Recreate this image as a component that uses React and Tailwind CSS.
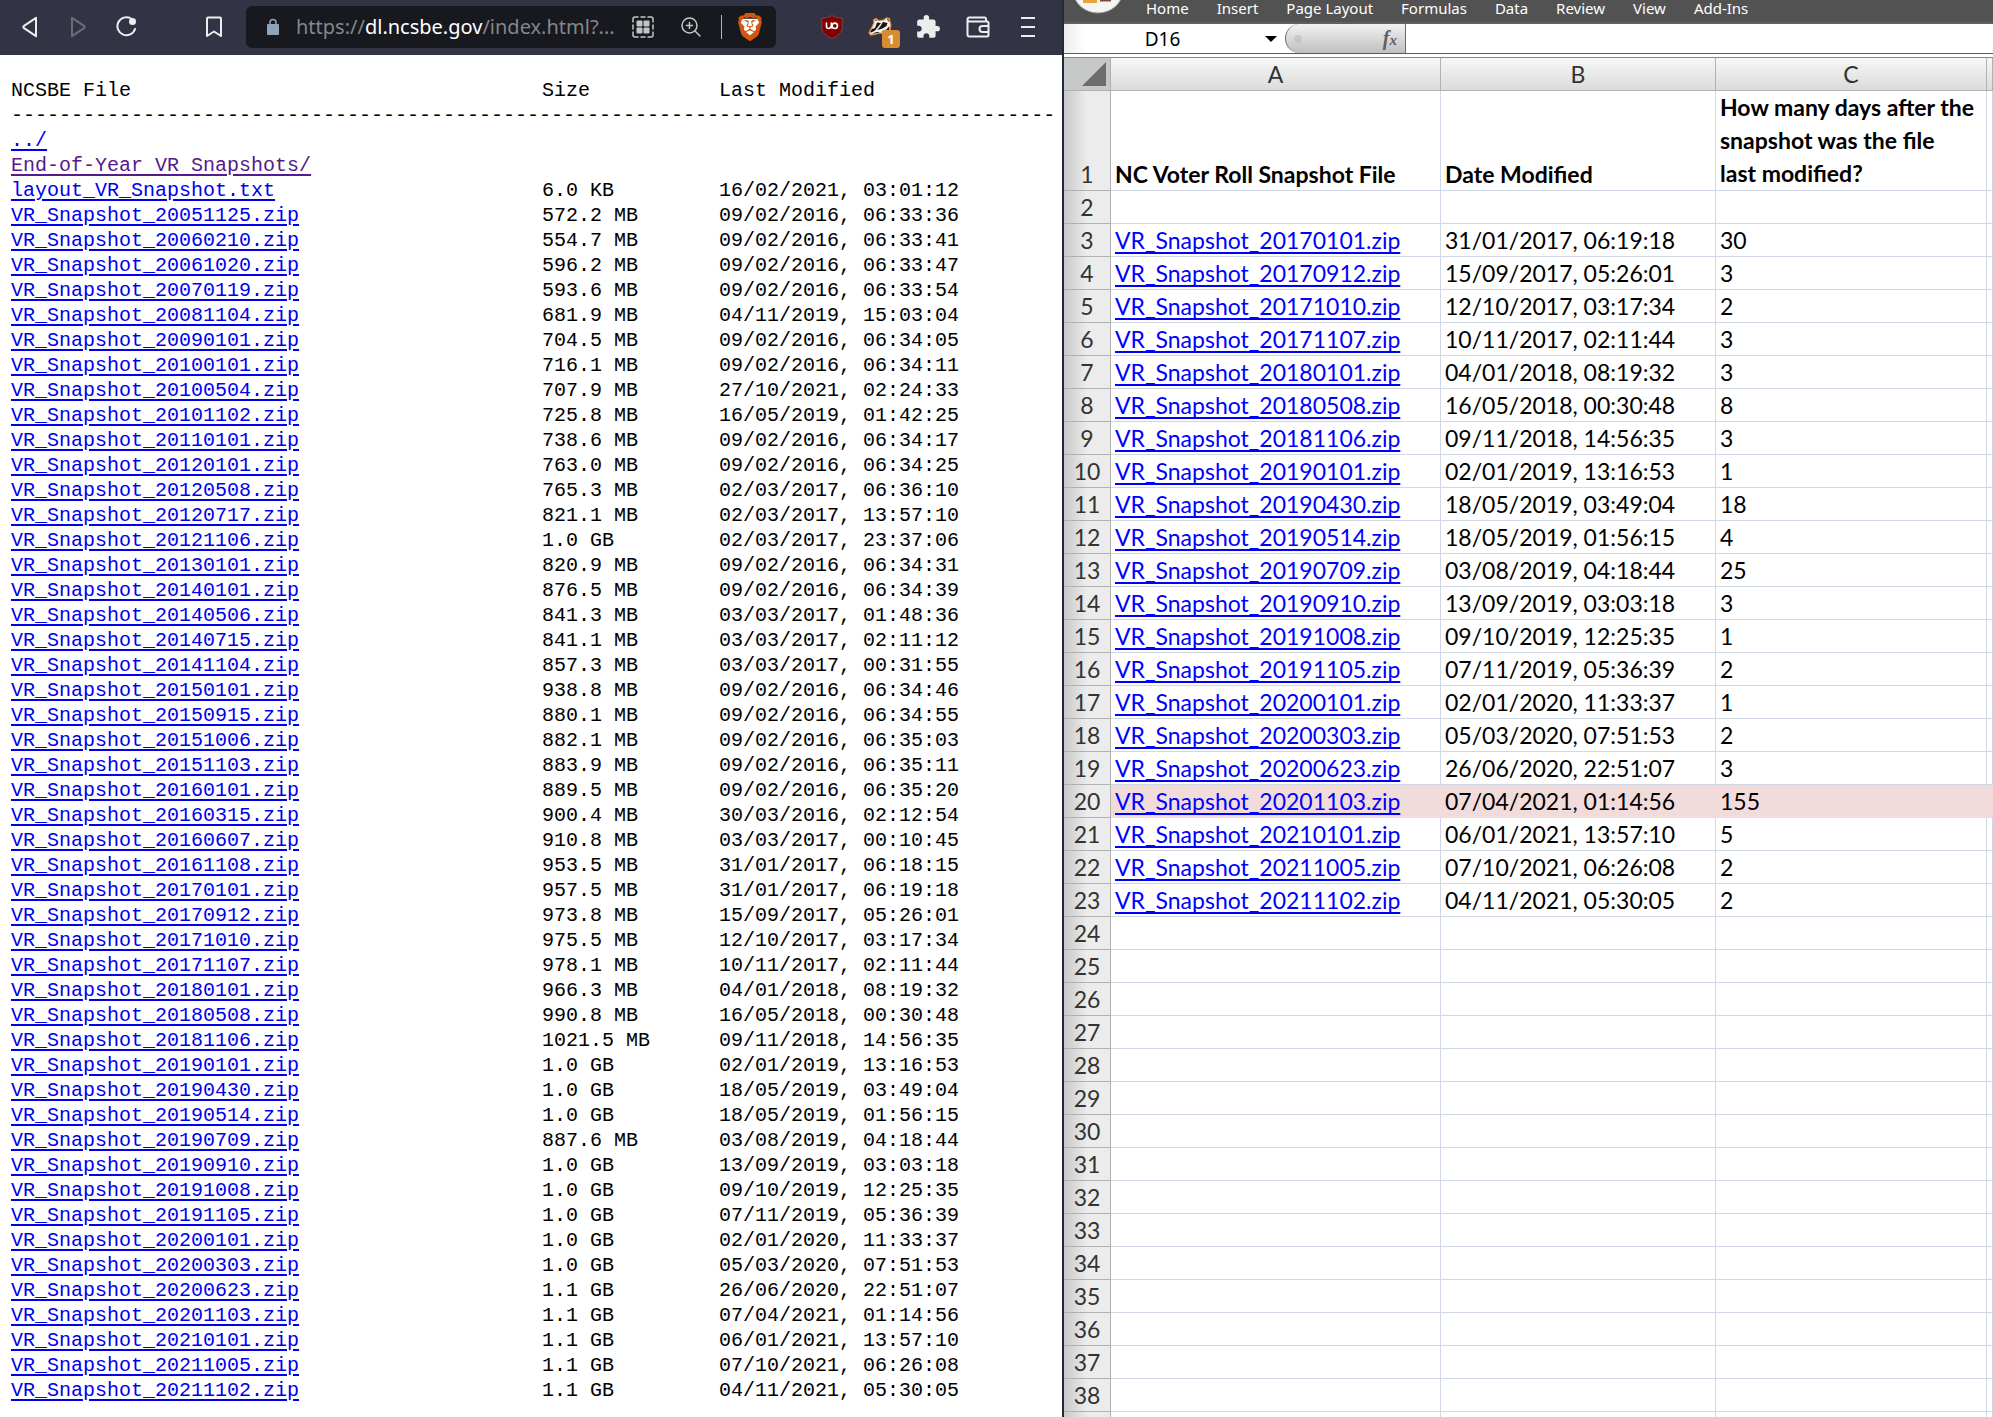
import { MdExtension } from 'react-icons/md'
import { SiBrave } from 'react-icons/si'

const FILES = [
  ['VR_Snapshot_20051125.zip', '572.2 MB', '09/02/2016, 06:33:36'],
  ['VR_Snapshot_20060210.zip', '554.7 MB', '09/02/2016, 06:33:41'],
  ['VR_Snapshot_20061020.zip', '596.2 MB', '09/02/2016, 06:33:47'],
  ['VR_Snapshot_20070119.zip', '593.6 MB', '09/02/2016, 06:33:54'],
  ['VR_Snapshot_20081104.zip', '681.9 MB', '04/11/2019, 15:03:04'],
  ['VR_Snapshot_20090101.zip', '704.5 MB', '09/02/2016, 06:34:05'],
  ['VR_Snapshot_20100101.zip', '716.1 MB', '09/02/2016, 06:34:11'],
  ['VR_Snapshot_20100504.zip', '707.9 MB', '27/10/2021, 02:24:33'],
  ['VR_Snapshot_20101102.zip', '725.8 MB', '16/05/2019, 01:42:25'],
  ['VR_Snapshot_20110101.zip', '738.6 MB', '09/02/2016, 06:34:17'],
  ['VR_Snapshot_20120101.zip', '763.0 MB', '09/02/2016, 06:34:25'],
  ['VR_Snapshot_20120508.zip', '765.3 MB', '02/03/2017, 06:36:10'],
  ['VR_Snapshot_20120717.zip', '821.1 MB', '02/03/2017, 13:57:10'],
  ['VR_Snapshot_20121106.zip', '1.0 GB', '02/03/2017, 23:37:06'],
  ['VR_Snapshot_20130101.zip', '820.9 MB', '09/02/2016, 06:34:31'],
  ['VR_Snapshot_20140101.zip', '876.5 MB', '09/02/2016, 06:34:39'],
  ['VR_Snapshot_20140506.zip', '841.3 MB', '03/03/2017, 01:48:36'],
  ['VR_Snapshot_20140715.zip', '841.1 MB', '03/03/2017, 02:11:12'],
  ['VR_Snapshot_20141104.zip', '857.3 MB', '03/03/2017, 00:31:55'],
  ['VR_Snapshot_20150101.zip', '938.8 MB', '09/02/2016, 06:34:46'],
  ['VR_Snapshot_20150915.zip', '880.1 MB', '09/02/2016, 06:34:55'],
  ['VR_Snapshot_20151006.zip', '882.1 MB', '09/02/2016, 06:35:03'],
  ['VR_Snapshot_20151103.zip', '883.9 MB', '09/02/2016, 06:35:11'],
  ['VR_Snapshot_20160101.zip', '889.5 MB', '09/02/2016, 06:35:20'],
  ['VR_Snapshot_20160315.zip', '900.4 MB', '30/03/2016, 02:12:54'],
  ['VR_Snapshot_20160607.zip', '910.8 MB', '03/03/2017, 00:10:45'],
  ['VR_Snapshot_20161108.zip', '953.5 MB', '31/01/2017, 06:18:15'],
  ['VR_Snapshot_20170101.zip', '957.5 MB', '31/01/2017, 06:19:18'],
  ['VR_Snapshot_20170912.zip', '973.8 MB', '15/09/2017, 05:26:01'],
  ['VR_Snapshot_20171010.zip', '975.5 MB', '12/10/2017, 03:17:34'],
  ['VR_Snapshot_20171107.zip', '978.1 MB', '10/11/2017, 02:11:44'],
  ['VR_Snapshot_20180101.zip', '966.3 MB', '04/01/2018, 08:19:32'],
  ['VR_Snapshot_20180508.zip', '990.8 MB', '16/05/2018, 00:30:48'],
  ['VR_Snapshot_20181106.zip', '1021.5 MB', '09/11/2018, 14:56:35'],
  ['VR_Snapshot_20190101.zip', '1.0 GB', '02/01/2019, 13:16:53'],
  ['VR_Snapshot_20190430.zip', '1.0 GB', '18/05/2019, 03:49:04'],
  ['VR_Snapshot_20190514.zip', '1.0 GB', '18/05/2019, 01:56:15'],
  ['VR_Snapshot_20190709.zip', '887.6 MB', '03/08/2019, 04:18:44'],
  ['VR_Snapshot_20190910.zip', '1.0 GB', '13/09/2019, 03:03:18'],
  ['VR_Snapshot_20191008.zip', '1.0 GB', '09/10/2019, 12:25:35'],
  ['VR_Snapshot_20191105.zip', '1.0 GB', '07/11/2019, 05:36:39'],
  ['VR_Snapshot_20200101.zip', '1.0 GB', '02/01/2020, 11:33:37'],
  ['VR_Snapshot_20200303.zip', '1.0 GB', '05/03/2020, 07:51:53'],
  ['VR_Snapshot_20200623.zip', '1.1 GB', '26/06/2020, 22:51:07'],
  ['VR_Snapshot_20201103.zip', '1.1 GB', '07/04/2021, 01:14:56'],
  ['VR_Snapshot_20210101.zip', '1.1 GB', '06/01/2021, 13:57:10'],
  ['VR_Snapshot_20211005.zip', '1.1 GB', '07/10/2021, 06:26:08'],
  ['VR_Snapshot_20211102.zip', '1.1 GB', '04/11/2021, 05:30:05'],
]

// spreadsheet rows 3 to 23: file, date modified, days late
const SHEET = [
  ['VR_Snapshot_20170101.zip', '31/01/2017, 06:19:18', 30],
  ['VR_Snapshot_20170912.zip', '15/09/2017, 05:26:01', 3],
  ['VR_Snapshot_20171010.zip', '12/10/2017, 03:17:34', 2],
  ['VR_Snapshot_20171107.zip', '10/11/2017, 02:11:44', 3],
  ['VR_Snapshot_20180101.zip', '04/01/2018, 08:19:32', 3],
  ['VR_Snapshot_20180508.zip', '16/05/2018, 00:30:48', 8],
  ['VR_Snapshot_20181106.zip', '09/11/2018, 14:56:35', 3],
  ['VR_Snapshot_20190101.zip', '02/01/2019, 13:16:53', 1],
  ['VR_Snapshot_20190430.zip', '18/05/2019, 03:49:04', 18],
  ['VR_Snapshot_20190514.zip', '18/05/2019, 01:56:15', 4],
  ['VR_Snapshot_20190709.zip', '03/08/2019, 04:18:44', 25],
  ['VR_Snapshot_20190910.zip', '13/09/2019, 03:03:18', 3],
  ['VR_Snapshot_20191008.zip', '09/10/2019, 12:25:35', 1],
  ['VR_Snapshot_20191105.zip', '07/11/2019, 05:36:39', 2],
  ['VR_Snapshot_20200101.zip', '02/01/2020, 11:33:37', 1],
  ['VR_Snapshot_20200303.zip', '05/03/2020, 07:51:53', 2],
  ['VR_Snapshot_20200623.zip', '26/06/2020, 22:51:07', 3],
  ['VR_Snapshot_20201103.zip', '07/04/2021, 01:14:56', 155],
  ['VR_Snapshot_20210101.zip', '06/01/2021, 13:57:10', 5],
  ['VR_Snapshot_20211005.zip', '07/10/2021, 06:26:08', 2],
  ['VR_Snapshot_20211102.zip', '04/11/2021, 05:30:05', 2],
]

const LAST_ROW = 39
const FLAGGED_ROW = 20
const MENU = ['Home', 'Insert', 'Page Layout', 'Formulas', 'Data', 'Review', 'View', 'Add-Ins']

function Icon({ className, children, viewBox = '0 0 24 24' }) {
  return (
    <svg viewBox={viewBox} fill="none" stroke="currentColor" strokeWidth={2} strokeLinecap="round" strokeLinejoin="round" className={className}>
      {children}
    </svg>
  )
}

function ToolButton({ label, className = '', children }) {
  return (
    <button type="button" aria-label={label} className={`flex h-8 w-8 shrink-0 items-center justify-center text-[#ededed] ${className}`}>
      {children}
    </button>
  )
}

function AddressBar() {
  return (
    <div className="ml-4 flex h-[42px] min-w-0 flex-1 items-center rounded-md bg-[#17191f] pl-5 pr-[10px]">
      <svg viewBox="0 0 14 18" className="mr-4 h-[18px] w-[14px] shrink-0">
        <path d="M4 8V4.5a3 3 0 0 1 6 0V8" fill="none" stroke="#8ea3b8" strokeWidth="1.5" />
        <rect x="1" y="6" width="12" height="11" rx="1" fill="#8ea3b8" />
      </svg>
      <p className="min-w-0 flex-1 whitespace-nowrap font-['Noto_Sans',sans-serif] text-[20px] leading-7 text-[#85868c]">
        https://<span className="text-white">dl.ncsbe.gov</span>/index.html?...
      </p>
      <ToolButton label="QR code">
        <Icon viewBox="0 0 22 22" className="h-[22px] w-[22px] text-[#c4c5c8]">
          <path strokeWidth="1.5" d="M1 6V3a2 2 0 0 1 2-2h3M9 1h4M16 1h3a2 2 0 0 1 2 2v3M21 9v4M21 16v3a2 2 0 0 1-2 2h-3M13 21H9M6 21H3a2 2 0 0 1-2-2v-3M1 13V9" />
          <g fill="currentColor" stroke="none">
            <rect x="4.500" y="4.500" width="6" height="6" rx="1" />
            <rect x="11.500" y="4.500" width="6" height="6" rx="1" />
            <rect x="4.500" y="11.500" width="6" height="6" rx="1" />
            <rect x="11.500" y="11.500" width="6" height="6" rx="1" />
          </g>
        </Icon>
      </ToolButton>
      <ToolButton label="Zoom" className="ml-4">
        <Icon viewBox="0 0 20 20" className="h-5 w-5 text-[#c4c5c8]">
          <g strokeWidth="1.5">
            <circle cx="8.5" cy="8.5" r="7.5" />
            <path d="m14 14 5 5M8.500 5.500v6M5.500 8.500h6" />
          </g>
        </Icon>
      </ToolButton>
      <span className="ml-[14px] h-6 w-px shrink-0 bg-[#b4b5b8]" />
      <ToolButton label="Brave Shields" className="ml-3">
        <svg viewBox="0 0 24 24" className="h-7 w-7">
          <path fill="#fff" d="M5 5h14l1 4-3 8-5 5-5-5-3-8z" />
          <SiBrave size={24} color="#d2570c" />
        </svg>
      </ToolButton>
    </div>
  )
}

function BrowserToolbar() {
  return (
    <header className="flex h-[55px] items-center bg-[#323445] pl-[14px] pr-[18px] pb-px">
      <ToolButton label="Back">
        <Icon viewBox="0 0 16 22" className="h-[22px] w-4">
          <path d="M14 1.800v18.400L2 12.200a1.500 1.500 0 0 1 0-2.400z" />
        </Icon>
      </ToolButton>
      <ToolButton label="Forward" className="ml-4">
        <Icon viewBox="0 0 16 22" className="h-[22px] w-4 text-[#6f6a76]">
          <path d="M2 1.800v18.400l12-8a1.500 1.500 0 0 0 0-2.400z" />
        </Icon>
      </ToolButton>
      <ToolButton label="Reload" className="ml-4">
        <Icon viewBox="0 0 22 22" className="h-[22px] w-[22px]">
          <path d="M16 2.500A9 9 0 1 0 20 13" />
          <circle cx="17.500" cy="5.500" r="3.500" fill="currentColor" stroke="none" />
        </Icon>
      </ToolButton>
      <ToolButton label="Bookmark" className="ml-14">
        <Icon viewBox="0 0 18 22" className="h-[22px] w-[18px]">
          <path d="M3 1.500h12a1 1 0 0 1 1 1V20l-7-4.500L2 20V2.500a1 1 0 0 1 1-1z" />
        </Icon>
      </ToolButton>
      <AddressBar />
      <ToolButton label="uBlock Origin" className="ml-10">
        <svg viewBox="0 0 22 24" className="h-6 w-[22px]">
          <path fill="#800000" stroke="#a05a5a" strokeWidth=".6" d="M11 .5C8 2.500 4.500 3 .8 3v9c0 6 5 9 10.200 11.500C16.200 21 21.200 18 21.200 12V3C17.500 3 14 2.500 11 .5z" />
          <path fill="none" stroke="#fff" strokeWidth="1.600" d="M5.500 7.500v4a2 2 0 0 0 4 0M10.300 7.500v6" />
          <circle cx="13.800" cy="10.800" r="2.700" fill="none" stroke="#fff" strokeWidth="1.600" />
        </svg>
      </ToolButton>
      <ToolButton label="Privacy Badger" className="relative ml-4">
        <svg viewBox="0 0 24 20" className="h-5 w-6">
          <path fill="#f4f1ee" stroke="#e0873a" strokeWidth="1.200" d="M6 5.500 5.500 3 8 1.500l2.500 2 5-.5 3-2.200 3 .7.5 3.500L23 8l-1 5-4 4-6-1-5 1.500L2.500 18 1 15.500 3.500 11z" />
          <path fill="#151515" d="m9 5.500 4 .5-2 2.500-4 5-3.500 2L2 15l2-3 3-1zM15 5l4.500 1-1 3-4 2.500-5 1.500 3-4zM19 2l1.800.4L20.500 5zM6.700 3.500l1.300-.8L9 4z" />
          <path fill="#151515" d="m21.500 9-.5 4-3.500 2.500-4-1 5-2zM4 16.500l5-1.500 3 .5-5 1z" />
        </svg>
        <span className="absolute left-[18px] top-[19px] flex h-[18px] w-[18px] items-center justify-center rounded-[3px] bg-[#d88c31] font-['Open_Sans',sans-serif] text-[13px] font-bold leading-none text-white">
          1
        </span>
      </ToolButton>
      <ToolButton label="Extensions" className="ml-4">
        <MdExtension className="h-[26px] w-[26px]" />
      </ToolButton>
      <ToolButton label="Wallet" className="ml-[18px]">
        <Icon viewBox="0 0 24 22" className="h-[22px] w-6">
          <path d="M20 5.500V3a1.500 1.500 0 0 0-1.500-1.500H3.500a2 2 0 0 0 0 4H21A1.500 1.500 0 0 1 22.500 7v12a1.500 1.500 0 0 1-1.500 1.500H3.500a2 2 0 0 1-2-2V4M22.500 10h-6a3 3 0 0 0 0 6h6" />
        </Icon>
      </ToolButton>
      <ToolButton label="Menu" className="ml-[18px]">
        <Icon viewBox="0 0 14 20" className="h-5 w-[14px]">
          <path strokeLinecap="butt" d="M0 1h14M0 10h14M0 19h14" />
        </Icon>
      </ToolButton>
    </header>
  )
}

function FileRow({ name, size, date, visited }) {
  return (
    <tr>
      <td className="p-0">
        <a href="#" className={visited ? 'text-[#551a8b] underline decoration-2 underline-offset-3' : 'text-[#0000ee] underline decoration-2 underline-offset-3'}>
          {name}
        </a>
      </td>
      <td className="p-0">{size}</td>
      <td className="p-0">{date}</td>
    </tr>
  )
}

function FileIndex() {
  return (
    <main className="overflow-hidden pl-[11px] pt-[23px]">
      <table className="w-full table-fixed border-collapse whitespace-nowrap text-left font-['Liberation_Mono',monospace] text-[20px] leading-[25px] text-black">
        <colgroup>
          <col className="w-[531px]" />
          <col className="w-[177px]" />
          <col />
        </colgroup>
        <thead>
          <tr>
            <th className="p-0 font-normal">NCSBE File</th>
            <th className="p-0 font-normal">Size</th>
            <th className="p-0 font-normal">Last Modified</th>
          </tr>
          <tr>
            <td colSpan={3} className="p-0">{'-'.repeat(87)}</td>
          </tr>
        </thead>
        <tbody>
          <FileRow name="../" />
          <FileRow name="End-of-Year VR Snapshots/" visited />
          <FileRow name="layout_VR_Snapshot.txt" size="6.0 KB" date="16/02/2021, 03:01:12" />
          {FILES.map(([name, size, date]) => (
            <FileRow key={name} name={name} size={size} date={date} />
          ))}
        </tbody>
      </table>
    </main>
  )
}

function Ribbon() {
  return (
    <nav className="relative flex h-6 items-start gap-7 border-b-2 border-[#606060] bg-[#525252] pl-[82px]">
      <svg viewBox="0 0 52 14" className="absolute left-2 top-0 h-[14px] w-[52px]">
        <ellipse cx="26" cy="-10" rx="25" ry="23" fill="#f4f4f4" stroke="#9a9a9a" />
        <path fill="#e8a33d" d="M11 0h14v3H11z" />
        <path fill="#7c4a3c" d="M28 0h11v1.500H28z" />
      </svg>
      {MENU.map(item => (
        <button key={item} type="button" className="whitespace-nowrap font-['Noto_Sans',sans-serif] text-[15px] leading-4 text-white">
          {item}
        </button>
      ))}
    </nav>
  )
}

function FormulaBar() {
  return (
    <div className="flex h-[30px] items-stretch border-b border-[#5a5a5a] bg-white">
      <div className="flex w-[221px] items-center bg-linear-to-r from-[#ededed] to-white to-10% pr-2">
        <input
          aria-label="Name box"
          defaultValue="D16"
          className="min-w-0 flex-1 bg-transparent pr-1 text-center font-['Noto_Sans',sans-serif] text-[19px] leading-6 text-black outline-none"
        />
        <button type="button" aria-label="Open name list">
          <svg viewBox="0 0 12 6" className="h-[6px] w-3"><path d="M0 0h12L6 6z" fill="#000" /></svg>
        </button>
      </div>
      <div className="flex w-[121px] items-center justify-between rounded-l-full border border-y-0 border-[#6a6a6a] bg-linear-to-b from-[#f2f2f2] to-[#bfbfbf] pl-2 pr-2">
        <span className="h-2 w-2 rounded-full bg-[#c4c8c6]" />
        <button type="button" aria-label="Insert function" className="font-['Liberation_Serif',serif] text-[20px] font-bold italic leading-6 text-[#5f5f66]">
          f<span className="text-[15px]">x</span>
        </button>
      </div>
      <input aria-label="Formula" className="min-w-0 flex-1 bg-white px-2 outline-none" />
    </div>
  )
}

function RowHead({ n }) {
  return (
    <th scope="row" className="border-b border-r border-[#b1b1b1] bg-linear-to-r from-[#c9c9c9] to-[#ececec] to-50% p-0 text-center align-bottom font-normal text-[#333]">
      {n}
    </th>
  )
}

function SheetRow({ n }) {
  const [file, date, days] = SHEET[n - 3] ?? []
  const cell = n === FLAGGED_ROW ? 'border-b border-r border-[#f2dcdb] bg-[#f2dcdb] p-0 pl-1' : 'border-b border-r border-[#d0d7e5] p-0 pl-1'
  return (
    <tr className="h-[33px]">
      <RowHead n={n} />
      <td className={cell}>
        {file && <a href="#" className="text-[#0000ff] underline decoration-2 underline-offset-3 [text-decoration-skip-ink:none]">{file}</a>}
      </td>
      <td className={cell}>{date}</td>
      <td className={cell}>{days}</td>
      <td className={cell} />
    </tr>
  )
}

function Sheet() {
  const rows = Array.from({ length: LAST_ROW - 1 }, (_, i) => i + 2)
  const colHead = 'border-b border-r border-[#b1b1b1] p-0 text-center font-normal text-[#333]'
  const title = 'border-b border-r border-[#d0d7e5] p-0 pl-1 text-left align-bottom font-bold'
  return (
    <table className="w-full table-fixed border-separate border-spacing-0 whitespace-nowrap font-['Lato',sans-serif] text-[23px] leading-8 text-black">
      <colgroup>
        <col className="w-[47px]" />
        <col className="w-[330px]" />
        <col className="w-[275px]" />
        <col className="w-[271px]" />
        <col />
      </colgroup>
      <thead>
        <tr className="h-[33px] bg-linear-to-b from-[#f6f8f7] to-[#dadada]">
          <td className="border-b border-r border-[#b1b1b1] bg-[#c6c8c7] p-0">
            <svg viewBox="0 0 24 24" className="ml-auto mr-1 h-6 w-6"><path d="M24 0v24H0z" fill="#6f6970" /></svg>
          </td>
          <th scope="col" className={colHead}>A</th>
          <th scope="col" className={colHead}>B</th>
          <th scope="col" className={colHead}>C</th>
          <th className={colHead} />
        </tr>
      </thead>
      <tbody>
        <tr className="h-[100px]">
          <RowHead n={1} />
          <td className={title}>NC Voter Roll Snapshot File</td>
          <td className={title}>Date Modified</td>
          <td className={title}>
            <p className="leading-[33px]">
              How many days after the
              <br />
              snapshot was the file
              <br />
              last modified?
            </p>
          </td>
          <td className={title} />
        </tr>
        {rows.map(n => <SheetRow key={n} n={n} />)}
      </tbody>
    </table>
  )
}

export default function App() {
  return (
    <div className="grid h-screen grid-cols-[1062fr_931fr] overflow-hidden bg-white">
      <section className="min-w-0">
        <BrowserToolbar />
        <FileIndex />
      </section>
      <section className="min-w-0 border-l-2 border-[#1f2b36]">
        <Ribbon />
        <FormulaBar />
        <div className="mt-[3px] border-t border-[#85888a]">
          <Sheet />
        </div>
      </section>
    </div>
  )
}
